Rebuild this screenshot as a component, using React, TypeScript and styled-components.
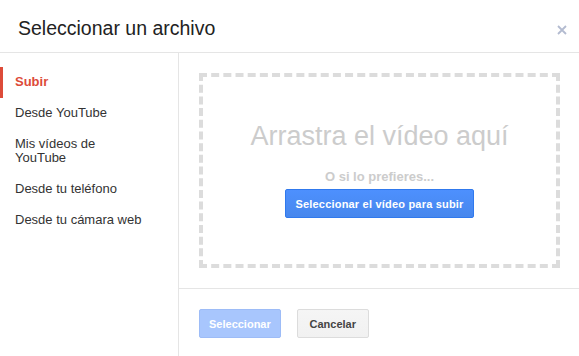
import React from "react";
import styled, { createGlobalStyle } from "styled-components";

const Global = createGlobalStyle`
  html, body { margin: 0; padding: 0; background: #fff; }
  body { font-family: "Liberation Sans", Arial, sans-serif; }
  * { box-sizing: border-box; }
`;

const Dialog = styled.div`
  width: 579px;
  height: 356px;
  background: #fff;
  display: flex;
  flex-direction: column;
  overflow: hidden;
`;

const Header = styled.div`
  height: 53px;
  flex: none;
  border-bottom: 1px solid #e5e5e5;
  display: flex;
  align-items: center;
  justify-content: space-between;
  padding: 4px 10px 0 18px;
`;

const Title = styled.h1`
  margin: 0;
  font-size: 19.5px;
  font-weight: normal;
  color: #222;
  line-height: 24px;
`;

const Close = styled.button`
  border: 0;
  background: none;
  padding: 0;
  margin-top: 3px;
  width: 14px;
  height: 14px;
  display: flex;
  align-items: center;
  justify-content: center;
  cursor: pointer;
`;

const Body = styled.div`
  flex: 1;
  display: flex;
  min-height: 0;
`;

const Sidebar = styled.nav`
  width: 179px;
  flex: none;
  border-right: 1px solid #e5e5e5;
  padding-top: 14px;
  display: flex;
  flex-direction: column;
`;

const NavItem = styled.div<{ $active?: boolean }>`
  padding: 8px 15px 9px 12px;
  font-size: 13px;
  line-height: 14px;
  color: ${(p) => (p.$active ? "#dd4b39" : "#333")};
  font-weight: ${(p) => (p.$active ? "bold" : "normal")};
  border-left: 3px solid ${(p) => (p.$active ? "#dd4b39" : "transparent")};
  cursor: pointer;
`;

const Main = styled.div`
  flex: 1;
  display: flex;
  flex-direction: column;
  min-width: 0;
`;

const Content = styled.div`
  padding: 20px 19px 20px 20px;
  border-bottom: 1px solid #e5e5e5;
`;

const DropZone = styled.div`
  height: 195px;
  border: 4px dashed #dcdcdc;
  display: flex;
  flex-direction: column;
  align-items: center;
  justify-content: center;
  padding-bottom: 2px;
`;

const DropTitle = styled.div`
  font-size: 27px;
  line-height: 31px;
  color: #ccc;
`;

const DropHint = styled.div`
  margin-top: 17px;
  font-size: 13px;
  line-height: 16px;
  font-weight: bold;
  color: #ccc;
`;

const Button = styled.button<{ $variant: "primary" | "disabled" | "default" }>`
  height: 29px;
  min-width: 72px;
  padding: 0 9px;
  border-radius: 2px;
  font-family: "Liberation Sans", Arial, sans-serif;
  font-size: 11px;
  font-weight: bold;
  cursor: ${(p) => (p.$variant === "disabled" ? "default" : "pointer")};
  color: ${(p) => (p.$variant === "default" ? "#444" : "#fff")};
  border: 1px solid
    ${(p) =>
      p.$variant === "primary"
        ? "#3079ed"
        : p.$variant === "disabled"
        ? "#9dbcf7"
        : "#dcdcdc"};
  background: ${(p) =>
    p.$variant === "primary"
      ? "linear-gradient(#4d90fe, #4787ed)"
      : p.$variant === "disabled"
      ? "#a8c6fd"
      : "linear-gradient(#f5f5f5, #f1f1f1)"};
`;

const UploadButton = styled(Button)`
  margin-top: 4px;
  letter-spacing: 0.2px;
`;

const Footer = styled.div`
  padding: 20px;
  display: flex;
  gap: 16px;
`;

const items = [
  "Subir",
  "Desde YouTube",
  "Mis vídeos de YouTube",
  "Desde tu teléfono",
  "Desde tu cámara web",
];

export default function App() {
  return (
    <>
      <Global />
      <Dialog>
        <Header>
          <Title>Seleccionar un archivo</Title>
          <Close aria-label="Cerrar">
            <svg width="10" height="10" viewBox="0 0 10 10">
              <path d="M1 1L9 9M9 1L1 9" stroke="#b3bbd0" strokeWidth="1.8" />
            </svg>
          </Close>
        </Header>
        <Body>
          <Sidebar>
            {items.map((t, i) => (
              <NavItem key={t} $active={i === 0}>
                {i === 2 ? (
                  <>
                    Mis vídeos de
                    <br />
                    YouTube
                  </>
                ) : (
                  t
                )}
              </NavItem>
            ))}
          </Sidebar>
          <Main>
            <Content>
              <DropZone>
                <DropTitle>Arrastra el vídeo aquí</DropTitle>
                <DropHint>O si lo prefieres...</DropHint>
                <UploadButton $variant="primary">
                  Seleccionar el vídeo para subir
                </UploadButton>
              </DropZone>
            </Content>
            <Footer>
              <Button $variant="disabled" disabled>
                Seleccionar
              </Button>
              <Button $variant="default">Cancelar</Button>
            </Footer>
          </Main>
        </Body>
      </Dialog>
    </>
  );
}
